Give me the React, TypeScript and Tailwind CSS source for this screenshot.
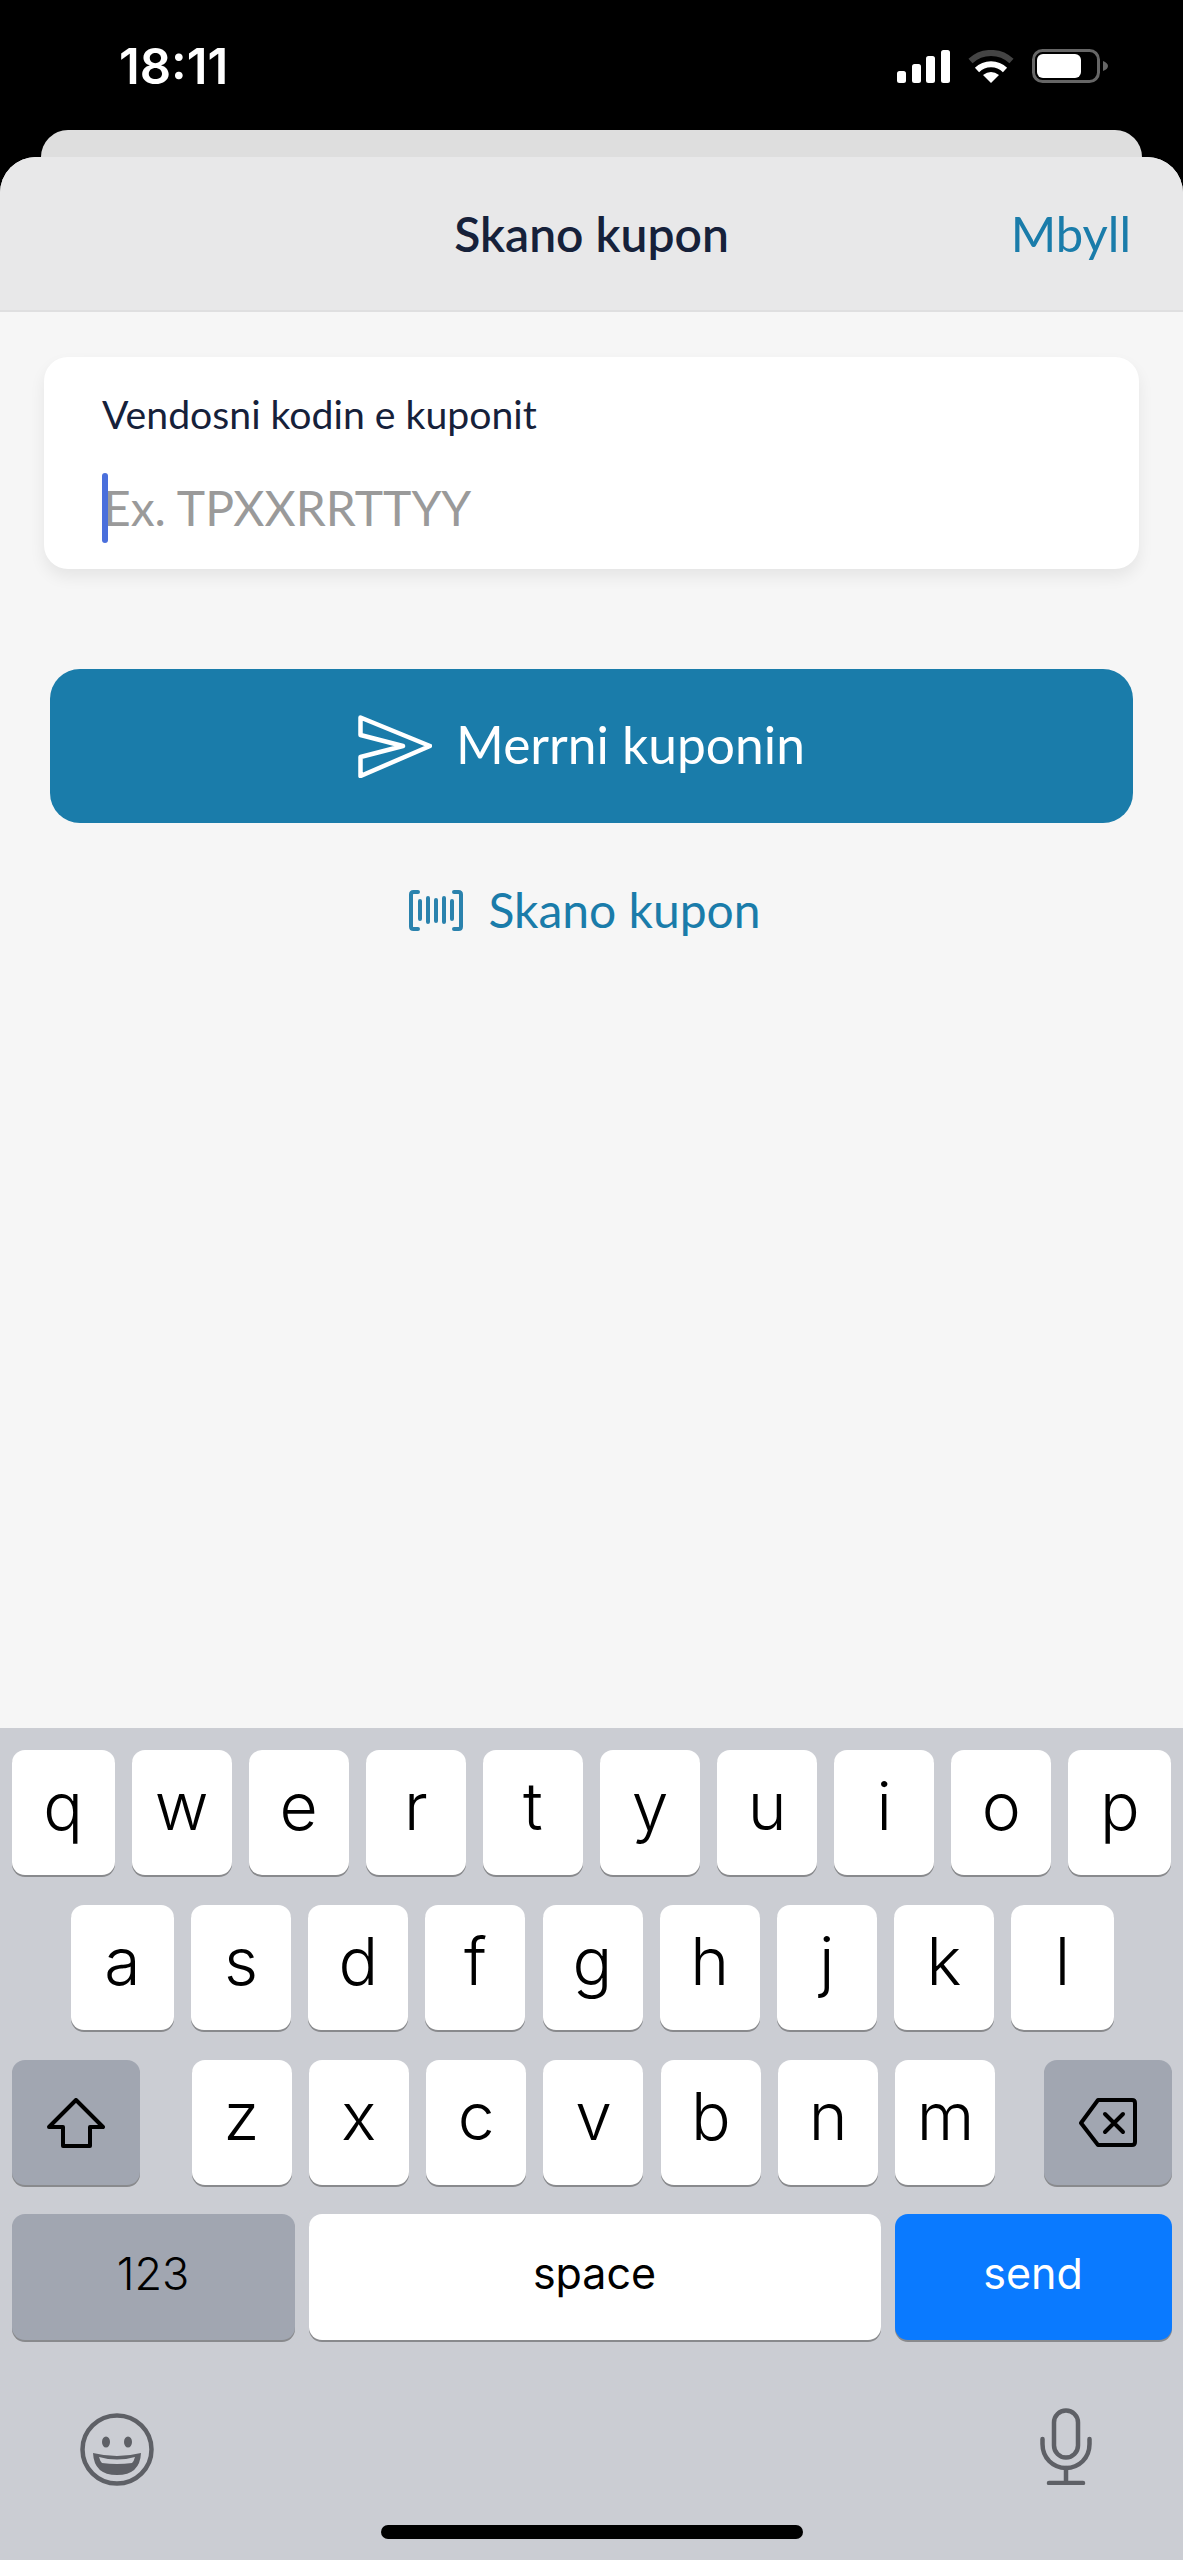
import React from "react";

const ui = "font-['Lato','Noto_Sans',sans-serif]";
const sys = "font-['Inter','Liberation_Sans',sans-serif]";

const keyBase =
  "flex items-center justify-center rounded-[13px] shadow-[0_2px_0_#898a8d] text-black";

function Key({ label, wide }: { label: string; wide?: boolean }) {
  return (
    <div
      className={`${keyBase} h-[125px] bg-white text-[66px] font-light leading-none pb-[13px] ${
        wide ? "w-[103px]" : "w-[100px]"
      }`}
    >
      {label}
    </div>
  );
}

function StatusIcons() {
  return (
    <div className="flex items-center">
      <svg width="53" height="33" viewBox="0 0 53 33" fill="#fff">
        <rect x="0" y="21" width="9" height="12" rx="2.5" />
        <rect x="15" y="14" width="9" height="19" rx="2.5" />
        <rect x="29" y="6" width="9" height="27" rx="2.5" />
        <rect x="44" y="0" width="9" height="33" rx="2.5" />
      </svg>
      <svg className="ml-[18px]" width="46" height="33" viewBox="0 0 46 33" fill="none">
        <path d="M2.5 11 A30 30 0 0 1 43.5 11" stroke="#444" strokeWidth="6" />
        <path d="M9 20 A20 20 0 0 1 37 20" stroke="#fff" strokeWidth="6" />
        <path d="M15 25 Q23 19 31 25 L23 33 Z" fill="#fff" />
      </svg>
      <svg className="ml-[18px]" width="76" height="34" viewBox="0 0 76 34" fill="none">
        <rect x="1.5" y="1.5" width="65" height="31" rx="9" stroke="#666" strokeWidth="3" />
        <rect x="5" y="5" width="44" height="24" rx="6" fill="#fff" />
        <path d="M71 12 C74 13 76 15 76 17 C76 19 74 21 71 22 Z" fill="#666" />
      </svg>
    </div>
  );
}

function SendIcon() {
  return (
    <svg width="74" height="63" viewBox="0 0 74 63" fill="none">
      <path
        d="M2.5 2.5 L72 31 L2.5 61 L2.5 42 L45 31 L2.5 20 Z"
        stroke="#fff"
        strokeWidth="4.5"
        strokeLinejoin="round"
      />
    </svg>
  );
}

function BarcodeIcon() {
  return (
    <svg width="54" height="41" viewBox="0 0 54 41" fill="none" stroke="#2a82ad" strokeWidth="4" strokeLinecap="round">
      <path d="M9 2 H4.5 Q2 2 2 4.5 V36.5 Q2 39 4.5 39 H9" />
      <path d="M45 2 H49.5 Q52 2 52 4.5 V36.5 Q52 39 49.5 39 H45" />
      <path d="M11 11 V29 M19 8 V32 M27 10 V31 M35 8 V32 M43 11 V29" />
    </svg>
  );
}

export default function App() {
  return (
    <div className="w-[1183px] h-[2560px] bg-black flex flex-col overflow-hidden">
      <div className="h-[130px] flex items-start justify-between pt-[49px] pl-[119px] pr-[75px]">
        <span className={`${sys} text-white text-[49px] font-semibold leading-[34px] mt-[1px]`}>18:11</span>
        <StatusIcons />
      </div>
      <div className="mx-[41px] h-[27px] rounded-t-[28px] bg-[#dedede]" />

      <div className="flex-1 flex flex-col rounded-t-[36px] overflow-hidden bg-[#f6f6f6]">
        <div className="h-[155px] shrink-0 grid grid-cols-[1fr_auto_1fr] items-center bg-[#e8e8e9] border-b-2 border-[#dfdfe0]">
          <div />
          <span className={`${ui} text-[48px] font-semibold text-[#16213a] leading-none`}>Skano kupon</span>
          <span className={`${ui} text-[49px] text-[#1a7caa] leading-none text-right pr-[52px]`}>Mbyll</span>
        </div>

        <div className="flex flex-col px-[44px] pt-[45px]">
          <div className="h-[212px] rounded-[24px] bg-white shadow-[0_8px_16px_rgba(0,0,0,0.07)] pl-[58px] pt-[32px]">
            <div className={`${ui} text-[39.2px] text-[#16213a] leading-[50px]`}>Vendosni kodin e kuponit</div>
            <div className="relative mt-[34px] h-[69px] flex items-center">
              <div className="absolute left-0 top-0 w-[6px] h-[70px] rounded-full bg-[#4a6fdc]" />
              <input
                readOnly
                placeholder="Ex. TPXXRRTTYY"
                className={`${ui} w-full pl-[1px] text-[48px] outline-none placeholder:text-[#9a9a9a]`}
              />
            </div>
          </div>

          <div className="mx-[6px] mt-[100px] h-[154px] rounded-[30px] bg-[#1a7caa] flex items-center justify-center gap-[24px] pr-[20px]">
            <SendIcon />
            <span className={`${ui} text-[51.5px] text-white leading-none pb-[3px]`}>Merrni kuponin</span>
          </div>

          <div className="mt-[63px] flex items-center justify-center gap-[25px] pr-[13px]">
            <BarcodeIcon />
            <span className={`${ui} text-[48px] text-[#1a7caa] leading-none`}>Skano kupon</span>
          </div>
        </div>
      </div>

      <div className={`${sys} h-[832px] shrink-0 bg-[#cbcdd3] pt-[22px] flex flex-col`}>
        <div className="flex justify-between px-[11.5px]">
          {"qwertyuiop".split("").map((k, i) => (
            <Key key={k} label={k} wide={i === 0 || i === 9} />
          ))}
        </div>
        <div className="mt-[30px] flex justify-between pl-[71px] pr-[69px]">
          {"asdfghjkl".split("").map((k, i) => (
            <Key key={k} label={k} wide={i === 0 || i === 8} />
          ))}
        </div>
        <div className="mt-[30px] flex items-start px-[11.5px]">
          <div className={`${keyBase} w-[128px] h-[125px] bg-[#a1a6b1]`}>
            <svg width="58" height="50" viewBox="0 0 58 50" fill="none" stroke="#000" strokeWidth="4" strokeLinejoin="round">
              <path d="M29 2 L56 29 H43 V48 H16 V29 H2 Z" />
            </svg>
          </div>
          <div className="flex-1 flex justify-between pl-[52px] pr-[48px]">
            {"zxcvbnm".split("").map((k) => (
              <Key key={k} label={k} />
            ))}
          </div>
          <div className={`${keyBase} w-[128px] h-[125px] bg-[#a1a6b1]`}>
            <svg width="58" height="49" viewBox="0 0 58 49" fill="none" stroke="#000" strokeWidth="4" strokeLinejoin="round" strokeLinecap="round">
              <path d="M19 2 H53 Q56 2 56 5 V44 Q56 47 53 47 H19 L2 25 Z" />
              <path d="M26 16 L44 34 M44 16 L26 34" />
            </svg>
          </div>
        </div>
        <div className="mt-[29px] flex gap-[14px] px-[11.5px]">
          <div className={`${keyBase} w-[283px] h-[126px] bg-[#a1a6b1] text-[45px] font-light pb-[6px]`}>123</div>
          <div className={`${keyBase} flex-1 h-[126px] bg-white text-[43px] pb-[8px]`}>space</div>
          <div className={`${keyBase} w-[277px] h-[126px] bg-[#0a7aff] text-white text-[43px] pb-[8px]`}>send</div>
        </div>

        <div className="mt-[68px] flex items-start justify-between pl-[80px] pr-[91px]">
          <svg className="mt-[5px]" width="74" height="73" viewBox="0 0 74 73">
            <ellipse cx="37" cy="36.5" rx="34.5" ry="34" fill="none" stroke="#5e6066" strokeWidth="4.5" />
            <ellipse cx="26" cy="29" rx="4" ry="5.5" fill="#5e6066" />
            <ellipse cx="48" cy="29" rx="4" ry="5.5" fill="#5e6066" />
            <path d="M13 40 Q37 46 61 40 Q60 62 37 62 Q14 62 13 40 Z" fill="#5e6066" />
            <path d="M19 44 Q37 49 55 44 Q54 48 52 50 Q37 52 22 50 Q20 48 19 44 Z" fill="#cbcdd3" />
          </svg>
          <svg width="52" height="77" viewBox="0 0 52 77" fill="none" stroke="#5e6066" strokeWidth="4.5" strokeLinecap="round">
            <rect x="14" y="2.5" width="24" height="47" rx="12" />
            <path d="M2.5 31 V36 C2.5 50 13 60 26 60 C39 60 49.5 50 49.5 36 V31" />
            <path d="M26 60 V74 M9 75 H43" />
          </svg>
        </div>
        <div className="mt-[39px] mx-auto w-[422px] h-[14px] rounded-full bg-black" />
      </div>
    </div>
  );
}
